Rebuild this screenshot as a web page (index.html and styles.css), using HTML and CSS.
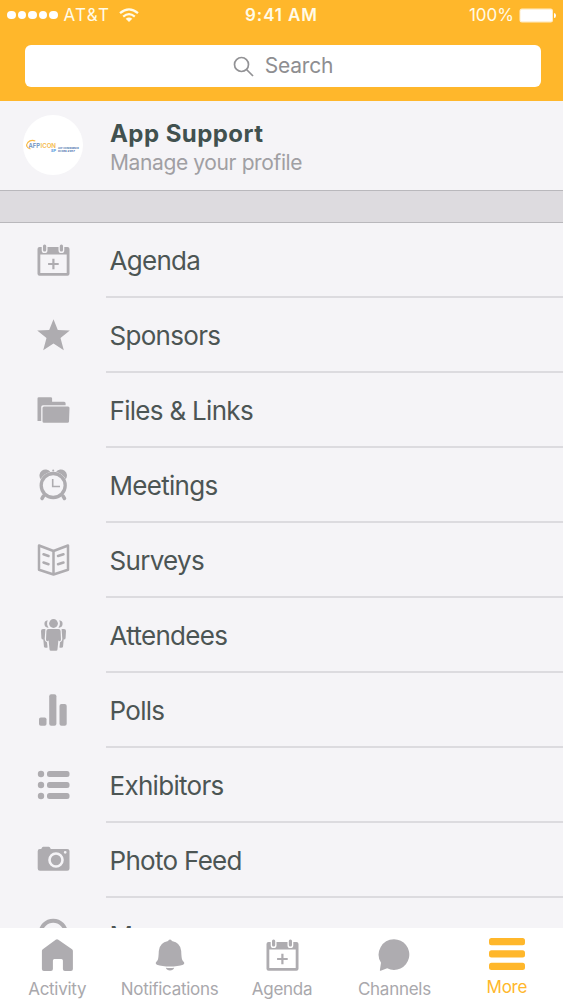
FILE: index.html
```html
<!DOCTYPE html>
<html lang="en">

<head>
    <meta charset="UTF-8">
    <meta name="viewport" content="width=device-width, initial-scale=1.0">
    <title>More</title>
    <link rel="stylesheet" href="styles.css">
</head>

<body>
    <!-- Shared icons -->
    <svg class="sprite" width="0" height="0">
        <symbol id="calendar" viewBox="0 0 36 36">
            <path fill-rule="evenodd" d="M4.500 5h2.200v3.200a2.900 2.900 0 0 0 5.800 0V5h11v3.200a2.900 2.900 0 0 0 5.800 0V5h3.200a2 2 0 0 1 2 2v24.700a2 2 0 0 1-2 2h-28a2 2 0 0 1-2-2V7a2 2 0 0 1 2-2zM5.300 12.500v18.400h26.400V12.500z" />
            <rect x="8" y="2.500" width="3.200" height="7" rx="1.500" />
            <rect x="24.800" y="2.500" width="3.200" height="7" rx="1.500" />
            <path d="M17.300 16.700h2.200v4.200h4.200v2.200h-4.200v4.200h-2.200v-4.200h-4.200v-2.200h4.200z" />
        </symbol>
    </svg>

    <div class="app">
        <header class="header">
            <div class="status-bar">
                <div class="carrier">
                    <span class="signal"><i></i><i></i><i></i><i></i><i></i></span>
                    <span class="carrier-name">AT&amp;T</span>
                    <svg class="wifi" viewBox="0 0 20 14">
                        <path d="M1 5.200Q10-2.600 19 5.200M4.200 8.600q5.800-5 11.600 0" fill="none" stroke="currentColor" stroke-width="2.200" />
                        <path d="M6.700 10.700q3.300-2.500 6.600 0L10 14z" />
                    </svg>
                </div>
                <div class="time">9:41 AM</div>
                <div class="power">
                    <span class="percent">100%</span>
                    <svg class="battery" viewBox="0 0 38 15">
                        <rect x="0.500" y="0.500" width="33.500" height="14" rx="2.500" opacity="0.750" />
                        <rect x="1.500" y="1.700" width="31.500" height="11.600" rx="1.500" />
                        <path d="M35 5q2 0 2 2.500T35 10z" />
                    </svg>
                </div>
            </div>
            <div class="search">
                <svg class="search-icon" viewBox="0 0 22 22">
                    <circle cx="8.500" cy="8.500" r="7" />
                    <path d="M13.500 13.500l6.500 6.500" />
                </svg>
                <span>Search</span>
            </div>
        </header>

        <section class="profile">
            <div class="avatar">
                <svg viewBox="0 0 60 60">
                    <path d="M7.500 34q-6-2-2.700-6.500 3-3.200 7.500-1.500" fill="none" stroke="#f8bb48" stroke-width="1.200" />
                    <text x="5.500" y="32.500" class="logo-text logo-blue" textLength="11.500" lengthAdjust="spacingAndGlyphs">AFP</text>
                    <text x="17.500" y="32.500" class="logo-text logo-gold" textLength="15.500" lengthAdjust="spacingAndGlyphs">ICON</text>
                    <text x="28" y="36.800" class="logo-small logo-sky" textLength="5" lengthAdjust="spacingAndGlyphs">SP</text>
                    <text x="35" y="34" class="logo-tiny logo-navy" textLength="21" lengthAdjust="spacingAndGlyphs">AFP CONFERENCE</text>
                    <text x="35" y="36.900" class="logo-tiny logo-navy" textLength="17" lengthAdjust="spacingAndGlyphs">ICON 2017</text>
                </svg>
            </div>
            <div class="profile-text">
                <div class="profile-name">App Support</div>
                <div class="profile-link">Manage your profile</div>
            </div>
        </section>

        <div class="divider"></div>

        <main class="menu">
            <div class="row">
                <svg class="icon"><use href="#calendar" /></svg>
                <div class="label">Agenda</div>
            </div>
            <div class="row">
                <svg class="icon" viewBox="0 0 36 36">
                    <path d="M18.500 2.300l4.300 10.600 12 .6-9.300 7.600 3.300 12.100-10.300-6.700-10.300 6.700 3.300-12.100-9.300-7.600 12-.6z" />
                </svg>
                <div class="label">Sponsors</div>
            </div>
            <div class="row">
                <svg class="icon" viewBox="0 0 36 36">
                    <path d="M2.500 29V6.500q0-1.300 1.300-1.300h12q1.300 0 1.300 1.300v3.200h12q1.500 0 1.500 1.500v2H8q-1.800 0-1.800 1.800V29z" />
                    <path d="M9 14.500h24q1.600 0 1.500 1.600L34 29.500q-.1 1.300-1.500 1.300H9q-1.500 0-1.500-1.500V16q0-1.500 1.500-1.500z" />
                </svg>
                <div class="label">Files &amp; Links</div>
            </div>
            <div class="row">
                <svg class="icon" viewBox="0 0 36 36">
                    <circle cx="18.200" cy="18.500" r="12" class="line thick" />
                    <path d="M5.700 12.200A5.500 5.500 0 1 1 15.300 4.800Q8.800 6.800 5.700 12.200zM30.700 12.200A5.500 5.500 0 1 0 21.100 4.800q6.500 2 9.600 7.400z" />
                    <path d="M8.500 29L7 31.500M28 29l1.500 2.500" class="line round" />
                    <path d="M17.700 12v7.500H25" class="line thin" />
                    <circle cx="18.200" cy="3.500" r="1" />
                </svg>
                <div class="label">Meetings</div>
            </div>
            <div class="row">
                <svg class="icon" viewBox="0 0 36 36">
                    <path d="M4 3.500L18.500 9 33 3.500v24.200l-14.500 4.800L4 27.700zM18.500 9v23" class="line book" />
                    <path d="M8.500 12.300l5 1.700M8.500 20.500l5 1.700M23 14l5.500-1.700M23 22.200l5.500-1.700" class="line book" />
                </svg>
                <div class="label">Surveys</div>
            </div>
            <div class="row">
                <svg class="icon" viewBox="0 0 36 36">
                    <circle cx="18.500" cy="6.500" r="4.400" />
                    <path d="M12.700 3.200a3.500 3.500 0 1 0 .9 7.400q-2.500-3.300-.9-7.400zM24.300 3.200a3.500 3.500 0 1 1-.9 7.400q2.500-3.300.9-7.400z" />
                    <path d="M13.500 12h10q2 0 2.100 2l.4 8.500q0 1.800-1.300 1.800-1 0-1.300-1l-.9 9q-.1 1.500-1.400 1.500h-5.200q-1.300 0-1.400-1.500l-.9-9q-.3 1-1.300 1-1.300 0-1.300-1.800l.4-8.500q.1-2 2.100-2z" />
                    <path d="M8 12h2.400l-.7 10q0 2.500 2.300 3.300l.6 5.200q-3 .7-3.600-.5l-.7-7.500q-1.900 0-1.900-1.500L6 14q0-2 2-2zM29 12h-2.400l.7 10q0 2.500-2.300 3.300l-.6 5.200q3 .7 3.600-.5l.7-7.500q1.900 0 1.900-1.500L31 14q0-2-2-2z" />
                </svg>
                <div class="label">Attendees</div>
            </div>
            <div class="row">
                <svg class="icon" viewBox="0 0 36 36">
                    <rect x="4" y="25.500" width="7.500" height="8.300" rx="1.800" />
                    <rect x="14.200" y="2.200" width="7.200" height="31.600" rx="2" />
                    <rect x="24.500" y="12" width="7.200" height="21.800" rx="2" />
                </svg>
                <div class="label">Polls</div>
            </div>
            <div class="row">
                <svg class="icon" viewBox="0 0 36 36">
                    <circle cx="6" cy="7" r="3.200" />
                    <circle cx="6" cy="18" r="3.200" />
                    <circle cx="6" cy="29" r="3.200" />
                    <rect x="12" y="4" width="22.500" height="6" rx="2.500" />
                    <rect x="12" y="15" width="22.500" height="6" rx="2.500" />
                    <rect x="12" y="26" width="22.500" height="6" rx="2.500" />
                </svg>
                <div class="label">Exhibitors</div>
            </div>
            <div class="row">
                <svg class="icon" viewBox="0 0 36 36">
                    <path fill-rule="evenodd" d="M4.800 7h1.400l1-1.700q.3-.5 1-.5h5.600q.7 0 1 .5l1 1.700h16.500q2.200 0 2.200 2v17.500q0 2.200-2.200 2.200H5q-2.300 0-2.300-2.200V9.200Q2.700 7 4.800 7zM21 10.200a7.800 7.800 0 1 0 0 15.600 7.800 7.800 0 1 0 0-15.600zM30.200 8.900a1.400 1.400 0 1 0 0 2.800 1.400 1.400 0 1 0 0-2.800z" />
                    <circle cx="21" cy="18" r="5.200" />
                </svg>
                <div class="label">Photo Feed</div>
            </div>
            <div class="row">
                <svg class="icon" viewBox="0 0 36 36">
                    <circle cx="18.200" cy="16.500" r="12.700" class="line ring" />
                </svg>
                <div class="label">Maps</div>
            </div>
        </main>

        <nav class="tabs">
            <div class="tab">
                <svg class="icon" viewBox="0 0 36 36">
                    <path d="M16.700 2.800q1.300-1 2.600 0L33 12.300q.9.700.9 1.800V32q0 2-2 2h-6q-2 0-2-2V23.500q0-1.500-1.500-1.500h-7q-1.500 0-1.500 1.500V32q0 2-2 2h-7q-2 0-2-2V14.100q0-1.100.9-1.800z" />
                </svg>
                <span>Activity</span>
            </div>
            <div class="tab">
                <svg class="icon" viewBox="0 0 36 36">
                    <path d="M18 2.500q1.600 0 1.900 1.600 8.700 1.700 9.300 10 .2 7 1.100 9 .6 1 1.300 1.600 1.500 1.800-.5 3Q26 29.500 18 29.500T4.900 27.700q-2-1.200-.5-3 .7-.6 1.300-1.600.9-2 1.100-9 .6-8.300 9.300-10Q16.400 2.500 18 2.500zM13.800 30.700q4.200.6 8.400 0-1 2.700-4.200 2.700t-4.200-2.700z" />
                </svg>
                <span>Notifications</span>
            </div>
            <div class="tab">
                <svg class="icon"><use href="#calendar" /></svg>
                <span>Agenda</span>
            </div>
            <div class="tab">
                <svg class="icon" viewBox="0 0 36 36">
                    <path d="M18 2.300a15.300 15.300 0 1 1-6.800 29L4.700 33.800q-1 .2-.8-.9l1.100-7.200A15.300 15.300 0 0 1 18 2.300z" />
                </svg>
                <span>Channels</span>
            </div>
            <div class="tab active">
                <svg class="icon" viewBox="0 0 36 36">
                    <rect x="0" y="3" width="36" height="7.300" rx="2.500" />
                    <rect x="0" y="15.300" width="36" height="7.300" rx="2.500" />
                    <rect x="0" y="27.700" width="36" height="7.300" rx="2.500" />
                </svg>
                <span>More</span>
            </div>
        </nav>
    </div>
</body>

</html>
```

FILE: styles.css
```css
* {
    box-sizing: border-box;
}

body {
    margin: 0;
    font-family: Inter, "Liberation Sans", sans-serif;
    background-color: #f5f4f7;
}

.sprite {
    display: none;
}

.app {
    display: flex;
    flex-direction: column;
    height: 1000px;
    overflow: hidden;
}

/* Header */
.header {
    flex: none;
    height: 101px;
    padding: 0 7px;
    background-color: #ffb72b;
}

.status-bar {
    display: grid;
    grid-template-columns: 1fr auto 1fr;
    align-items: center;
    height: 30px;
    color: #fffbe8;
    font-size: 17px;
    line-height: 30px;
}

.carrier,
.power,
.signal {
    display: flex;
    align-items: center;
}

.signal {
    gap: 2px;
}

.signal i {
    width: 8.500px;
    height: 8.500px;
    border-radius: 50%;
    background-color: #fff;
}

.carrier-name {
    margin-left: 6px;
    letter-spacing: 1.300px;
}

.wifi {
    width: 20px;
    height: 14px;
    margin-left: 9px;
    fill: currentColor;
}

.time {
    font-weight: 600;
    letter-spacing: 0.900px;
}

.power {
    justify-content: flex-end;
}

.percent {
    letter-spacing: 0;
}

.battery {
    width: 38px;
    height: 15px;
    margin-left: 5px;
    margin-right: -1px;
    fill: #fff;
}

.search {
    display: flex;
    align-items: center;
    justify-content: center;
    height: 42px;
    margin: 15px 15px 0 18px;
    border-radius: 6px;
    background-color: #fff;
    color: #8e8e91;
    font-size: 21px;
    line-height: 44px;
    letter-spacing: -0.200px;
}

.search-icon {
    width: 22px;
    height: 22px;
    margin-top: 2px;
    margin-right: 10px;
    fill: none;
    stroke: #929295;
    stroke-width: 1.700;
}

/* Profile */
.profile {
    flex: none;
    display: flex;
    height: 89px;
    padding: 14px 0 0 23px;
}

.avatar {
    width: 60px;
    height: 60px;
    border-radius: 50%;
    background-color: #fff;
}

.avatar svg {
    display: block;
}

.logo-text {
    font-size: 6px;
    font-weight: 600;
}

.logo-small {
    font-size: 4px;
    font-weight: 700;
}

.logo-tiny {
    font-size: 2.400px;
    font-weight: 700;
}

.logo-blue {
    fill: #6d8fbd;
}

.logo-gold {
    fill: #f5b848;
}

.logo-sky {
    fill: #5a9ce0;
}

.logo-navy {
    fill: #4169a8;
}

.profile-text {
    margin-left: 27px;
}

.profile-name {
    margin-top: 3px;
    color: #41514f;
    font-size: 24px;
    font-weight: 700;
    line-height: 31px;
    letter-spacing: 0.450px;
}

.profile-link {
    color: #a09fa3;
    font-size: 21px;
    line-height: 27px;
    letter-spacing: -0.380px;
}

.divider {
    flex: none;
    height: 33px;
    border-top: 1px solid #b9b8bc;
    border-bottom: 1px solid #b9b8bc;
    background-color: #dddbdf;
}

/* Menu */
.menu {
    flex: 1;
    min-height: 0;
    margin-top: -1px;
    overflow: hidden;
}

.row {
    display: flex;
    align-items: center;
    height: 75px;
    padding-left: 35px;
}

.icon {
    flex: none;
    width: 36px;
    height: 36px;
    fill: #aeacb0;
}

.label {
    flex: 1;
    height: 76px;
    margin-left: 35px;
    padding-left: 3.500px;
    border-bottom: 2px solid #dcdbdf;
    color: #4c5554;
    font-size: 26px;
    line-height: 78px;
    letter-spacing: -0.700px;
}

.line {
    fill: none;
    stroke: #aeacb0;
}

.thick {
    stroke-width: 3.300;
}

.thin {
    stroke-width: 1.600;
}

.round {
    stroke-width: 3.500;
    stroke-linecap: round;
}

.book {
    stroke-width: 2.500;
    stroke-linecap: round;
    stroke-linejoin: round;
}

.ring {
    stroke-width: 4;
}

/* Bottom tabs */
.tabs {
    flex: none;
    display: grid;
    grid-template-columns: repeat(5, 1fr);
    height: 72px;
    padding-left: 1px;
    background-color: #fff;
}

.tab {
    display: flex;
    flex-direction: column;
    align-items: center;
    padding-top: 9px;
    color: #a9a8ac;
    font-size: 17px;
    line-height: 32px;
}

.tab span {
    letter-spacing: -0.280px;
}

.active {
    padding-top: 7px;
    color: #ffb72b;
}

.active .icon {
    fill: #ffb72b;
}
```
